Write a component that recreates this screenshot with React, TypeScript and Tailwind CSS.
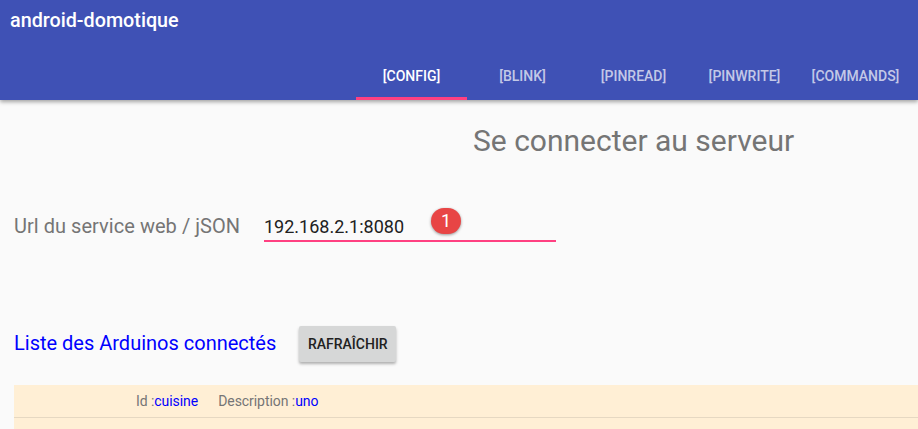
const TABS = ['[CONFIG]', '[BLINK]', '[PINREAD]', '[PINWRITE]', '[COMMANDS]']

export default function App() {
  return (
    <div className="h-[429px] w-[918px] overflow-hidden bg-[#fafafa] font-['Roboto',sans-serif]">
      <header className="relative flex h-[100px] flex-col justify-between bg-[#3f51b5] shadow-[0_2px_4px_rgba(0,0,0,0.35)]">
        <h1 className="pl-[10px] pt-[8px] text-[19.75px] leading-[26px] font-medium text-white">android-domotique</h1>
        <nav className="flex justify-end pr-[7px]">
          {TABS.map((tab, index) => (
            <div
              key={tab}
              className={
                index === 0
                  ? 'flex h-[48px] w-[111px] items-center justify-center border-b-[3px] border-[#ff4081] pt-[4px] text-[14px] font-medium text-white'
                  : 'flex h-[48px] w-[111px] items-center justify-center border-b-[3px] border-transparent pt-[4px] text-[14px] font-medium text-white/70'
              }
            >
              {tab}
            </div>
          ))}
        </nav>
      </header>

      <main>
        <h2 className="pl-[473px] pt-[21px] text-[30px] leading-[40px] text-[#757575]">Se connecter au serveur</h2>

        <div className="mt-[49px] flex items-end pl-[14px]">
          <label className="w-[250px] pb-[2px] text-[20px] leading-[28px] tracking-[0.04px] text-[#757575]">Url du service web / jSON</label>
          <div className="relative h-[32px] w-[292px] border-b-2 border-[#ff4081] text-[18px] leading-[34px] text-[#212121]">
            192.168.2.1:8080
            <span className="absolute left-[167px] top-[-2px] flex h-[26px] w-[30px] items-center justify-center rounded-full bg-[#e84545] text-[18px] leading-none text-white shadow-[0_1px_3px_rgba(0,0,0,0.4)]">
              1
            </span>
          </div>
        </div>

        <div className="mt-[84px] flex items-center pl-[14px]">
          <h3 className="mb-[2px] text-[20px] leading-[28px] text-[#0000ff]">Liste des Arduinos connectés</h3>
          <button
            type="button"
            className="ml-[23px] h-[36px] w-[97px] rounded-[2px] bg-[#d6d7d7] text-[14px] font-medium text-[#212121] shadow-[0_2px_3px_rgba(0,0,0,0.3)]"
          >
            RAFRAÎCHIR
          </button>
        </div>

        <div className="ml-[14px] mt-[23px] h-[60px] bg-[#ffefd5]">
          <div className="flex h-[33px] items-center border-b border-[#e6d8c2] pl-[122px] text-[14px] tracking-[-0.06px] text-[#757575]">
            <span>Id :</span>
            <span className="text-[#0000ff]">cuisine</span>
            <span className="ml-[20px]">Description :</span>
            <span className="text-[#0000ff]">uno</span>
          </div>
        </div>
      </main>
    </div>
  )
}
